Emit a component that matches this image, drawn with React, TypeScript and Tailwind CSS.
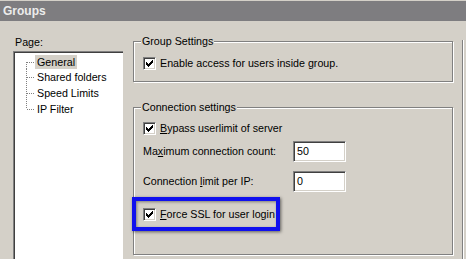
const FONT = "font-['Liberation_Sans',Arial,sans-serif]";

const CHECK_PIXELS: [number, number, number][] = [
  [0, 6, 6],
  [1, 5, 6],
  [2, 0, 0],
  [2, 4, 6],
  [3, 0, 1],
  [3, 3, 5],
  [4, 0, 4],
  [5, 1, 3],
  [6, 2, 2],
];

function CheckBox() {
  return (
    <span className="inline-flex w-[13px] h-[13px] shrink-0 bg-white border border-t-[#808080] border-l-[#808080] border-b-white border-r-white shadow-[inset_1px_1px_0_#404040,inset_-1px_-1px_0_#d4d0c8]">
      <svg width="11" height="11" viewBox="0 0 11 11" shapeRendering="crispEdges">
        {CHECK_PIXELS.map(([y, x1, x2], i) => (
          <rect key={i} x={x1 + 2} y={y + 2} width={x2 - x1 + 1} height={1} fill="#000" />
        ))}
      </svg>
    </span>
  );
}

function GroupBox({ title, className, children }: { title: string; className: string; children: React.ReactNode }) {
  return (
    <div className={`relative border border-[#808080] shadow-[1px_1px_0_#fff,inset_1px_1px_0_#fff] ${className}`}>
      <span className="absolute -top-[7px] left-[7px] bg-[#d4d0c8] px-[1px] leading-[13px]">{title}</span>
      {children}
    </div>
  );
}

function TextField({ value }: { value: string }) {
  return (
    <div className="w-[53px] h-[21px] bg-white border border-t-[#808080] border-l-[#808080] border-b-white border-r-white shadow-[inset_1px_1px_0_#404040,inset_-1px_-1px_0_#d4d0c8] pl-[3px] pt-[3px] leading-[13px]">
      {value}
    </div>
  );
}

const PAGES = ['General', 'Shared folders', 'Speed Limits', 'IP Filter'];

function TreeRow({ label, index }: { label: string; index: number }) {
  const first = index === 0;
  const last = index === PAGES.length - 1;
  return (
    <div className="flex items-center h-[15.6px]">
      <svg width="20" height="16" className="shrink-0">
        <line x1="11.5" y1={first ? 8 : 0} x2="11.5" y2={last ? 8 : 16} stroke="#808080" strokeDasharray="1 1" />
        <line x1="12" y1="8.5" x2="20" y2="8.5" stroke="#808080" strokeDasharray="1 1" />
      </svg>
      <span className={`h-[14px] px-[2px] leading-[14px] ${first ? 'bg-[#d4d0c8]' : ''}`}>{label}</span>
    </div>
  );
}

export default function App() {
  return (
    <div className={`w-[466px] h-[259px] overflow-hidden bg-[#d4d0c8] text-[10.7px] text-black ${FONT}`}>
      {/* Title bar */}
      <div className="mt-[1px] h-[20px] bg-[#7e7d80] pl-[3px] flex items-center text-[12px] font-bold text-[#ececec]">
        Groups
      </div>

      <div className="flex">
        {/* Page tree */}
        <div className="w-[123px] pl-[13px] shrink-0">
          <div className="pt-[15px] ml-[2px] h-[28px] leading-[13px]">Page:</div>
          <div className="mt-[2px] w-[110px] h-[220px] bg-white border-t border-l border-[#808080] shadow-[inset_1px_1px_0_#404040] pt-[2px] pl-[1px]">
            {PAGES.map((p, i) => (
              <TreeRow key={p} label={p} index={i} />
            ))}
          </div>
        </div>

        {/* Settings */}
        <div className="pl-[10px] pt-[19px]">
          <div className="w-[330px] h-[230px] border-r border-[#808080] shadow-[1px_0_0_#fff] pt-[1px]">
            <GroupBox title="Group Settings" className="w-[320px] h-[41px] pl-[9px] pt-[15px]">
              <div className="flex items-center gap-[4px] h-[13px] leading-[13px]">
                <CheckBox />
                <span>Enable access for users inside group.</span>
              </div>
            </GroupBox>

            <GroupBox title="Connection settings" className="mt-[25px] w-[320px] h-[148px] pl-[9px] pt-[14px]">
              <div className="flex items-center gap-[4px] h-[13px] leading-[13px]">
                <CheckBox />
                <span>
                  <span className="underline">B</span>ypass userlimit of server
                </span>
              </div>
              <div className="mt-[6px] flex items-center h-[21px]">
                <span className="w-[150px] leading-[13px]">
                  Ma<span className="underline">x</span>imum connection count:
                </span>
                <TextField value="50" />
              </div>
              <div className="mt-[9px] flex items-center h-[21px]">
                <span className="w-[150px] leading-[13px]">
                  Connection <span className="underline">l</span>imit per IP:
                </span>
                <TextField value="0" />
              </div>
              <div className="mt-[5px] -ml-[11px] w-[148px] h-[34px] border-[4px] border-[#1010ee] shadow-[1px_1px_3px_rgba(0,0,0,0.55),inset_1px_1px_3px_rgba(0,0,0,0.4)] flex items-center gap-[4px] pl-[7px] leading-[13px]">
                <CheckBox />
                <span>
                  <span className="underline">F</span>orce SSL for user login
                </span>
              </div>
            </GroupBox>
          </div>
        </div>
      </div>
    </div>
  );
}
